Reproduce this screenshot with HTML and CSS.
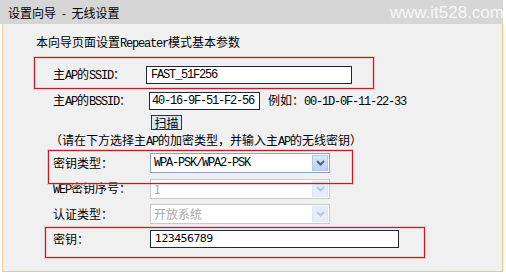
FILE: index.html
```html
<!DOCTYPE html>
<html lang="zh-CN">
<head>
    <meta charset="UTF-8">
    <meta name="viewport" content="width=device-width, initial-scale=1.0">
    <title>设置向导 - 无线设置</title>
    <link rel="stylesheet" href="styles.css">
</head>
<body>
    <div class="header">
        <span class="title">设置向导 - 无线设置</span>
        <span class="watermark">www.it528.com</span>
    </div>

    <div class="panel">
        <p class="intro">本向导页面设置<span class="mono">Repeater</span>模式基本参数</p>

        <div class="form">
            <div class="row row-ssid">
                <label>主<span class="mono">AP</span>的<span class="mono">SSID</span>：</label>
                <div class="input ssid">FAST_51F256</div>
            </div>
            <div class="row row-bssid">
                <label>主<span class="mono">AP</span>的<span class="mono">BSSID</span>：</label>
                <div class="input bssid">40-16-9F-51-F2-56</div>
                <span class="hint">例如：<span class="mono">00-1D-0F-11-22-33</span></span>
            </div>
            <div class="row row-scan">
                <label></label>
                <button class="scan">扫描</button>
            </div>
            <p class="note">（请在下方选择主<span class="mono">AP</span>的加密类型，并输入主<span class="mono">AP</span>的无线密钥）</p>
            <div class="row row-select">
                <label>密钥类型：</label>
                <div class="select">
                    <span class="value mono">WPA-PSK/WPA2-PSK</span>
                    <span class="arrow"><svg width="9" height="6" viewBox="0 0 9 6"><path d="M1 1 L4.5 4.5 L8 1" fill="none" stroke="#4d6185" stroke-width="2"/></svg></span>
                </div>
            </div>
            <div class="row row-wep">
                <label><span class="mono">WEP</span>密钥序号：</label>
                <div class="select disabled">
                    <span class="value">1</span>
                    <span class="arrow"><svg width="9" height="6" viewBox="0 0 9 6"><path d="M1 1 L4.5 4.5 L8 1" fill="none" stroke="#b8c8dc" stroke-width="2"/></svg></span>
                </div>
            </div>
            <div class="row row-auth">
                <label>认证类型：</label>
                <div class="select disabled">
                    <span class="value">开放系统</span>
                    <span class="arrow"><svg width="9" height="6" viewBox="0 0 9 6"><path d="M1 1 L4.5 4.5 L8 1" fill="none" stroke="#b8c8dc" stroke-width="2"/></svg></span>
                </div>
            </div>
            <div class="row row-key">
                <label>密钥：</label>
                <div class="input key">123456789</div>
            </div>
        </div>

        <!-- red annotation boxes drawn over the form -->
        <div class="mark mark-ssid"></div>
        <div class="mark mark-type"></div>
        <div class="mark mark-key"></div>
    </div>
</body>
</html>
```

FILE: styles.css
```css
body {
    margin: 0;
    font-family: "Noto Sans CJK SC", "Liberation Sans", sans-serif;
    font-size: 12px;
    color: #000000;
    background-color: #ffffff;
}

.header {
    width: 503px;
    height: 24px;
    background-color: #d6d6d6;
    display: flex;
    justify-content: space-between;
    align-items: center;
}

.title {
    padding-left: 8px;
    padding-top: 2px;
    line-height: 14px;
    word-spacing: 3px;
}

.watermark {
    font-family: "Liberation Sans", sans-serif;
    font-size: 17px;
    color: #f6f6f6;
    margin-top: 2px;
    margin-right: -1px;
}

.panel {
    position: relative;
    box-sizing: border-box;
    width: 501px;
    margin-left: 2px;
    padding: 11px 0 21px 0;
    background-color: #f0f0f0;
    border-left: 1px solid #f3cf9e;
    border-right: 1px solid #f0bf82;
    border-bottom: 1px solid #f0c488;
}

.intro {
    margin: 0 0 11px 33px;
    line-height: 14px;
}

.mono {
    font-family: "Liberation Mono", monospace;
    letter-spacing: -1.2px;
}

.form {
    padding-left: 50px;
}

.row {
    display: flex;
    align-items: center;
}

.row label {
    width: 96px;
    flex-shrink: 0;
    line-height: 14px;
}

.row-ssid, .row-bssid, .row-select, .row-auth {
    height: 26px;
}

.row-wep {
    height: 25px;
}

.row-scan {
    height: 16px;
}

.row-key {
    height: 23px;
}

.input {
    box-sizing: border-box;
    height: 18px;
    background-color: #ffffff;
    border: 1px solid #1c2a30;
    padding: 0 4px;
    line-height: 16px;
    font-family: "Liberation Mono", monospace;
    font-size: 12px;
    letter-spacing: -1.2px;
}

.ssid {
    width: 206px;
    margin-left: -3px;
}

.bssid {
    width: 111px;
    padding: 0 2px;
}

.key {
    width: 249px;
    margin-left: 1px;
    font-family: "DejaVu Sans", sans-serif;
    font-size: 11px;
    letter-spacing: -0.6px;
}

.hint {
    margin-left: 8px;
    line-height: 14px;
}

.scan {
    box-sizing: border-box;
    height: 15px;
    width: 31px;
    margin-left: 2px;
    padding: 0;
    background-color: #d4eaf7;
    border: 1px solid #26343c;
    font-family: "Noto Sans CJK SC", sans-serif;
    font-size: 12px;
    line-height: 13px;
    color: #000000;
}

.note {
    margin: 0 0 0 -3px;
    height: 20px;
    line-height: 20px;
}

.select {
    box-sizing: border-box;
    width: 180px;
    height: 20px;
    margin-left: 1px;
    background-color: #ffffff;
    border: 1px solid #8ea4bc;
    display: flex;
    align-items: center;
    justify-content: space-between;
}

.select .value {
    padding-left: 3px;
    line-height: 14px;
}

.arrow {
    width: 16px;
    height: 16px;
    margin-right: 1px;
    background: linear-gradient(#dbe8fb, #bcd0f0);
    border: 1px solid #b4c8e8;
    box-sizing: border-box;
    display: flex;
    align-items: center;
    justify-content: center;
}

.select.disabled {
    border-color: #c8c8c8;
}

.select.disabled .value {
    color: #a8a8a8;
}

.select.disabled .arrow {
    background: #e4eefa;
    border-color: #dde8f6;
}

.mark {
    position: absolute;
    box-sizing: border-box;
    border: 1px solid #b8202c;
    box-shadow: 0 0 0 1px rgba(240, 150, 160, 0.45), inset 0 0 0 1px rgba(240, 150, 160, 0.35);
}

.mark-ssid {
    left: 31px;
    top: 33px;
    width: 340px;
    height: 32px;
}

.mark-type {
    left: 45px;
    top: 126px;
    width: 305px;
    height: 34px;
}

.mark-key {
    left: 42px;
    top: 203px;
    width: 380px;
    height: 31px;
}
```
